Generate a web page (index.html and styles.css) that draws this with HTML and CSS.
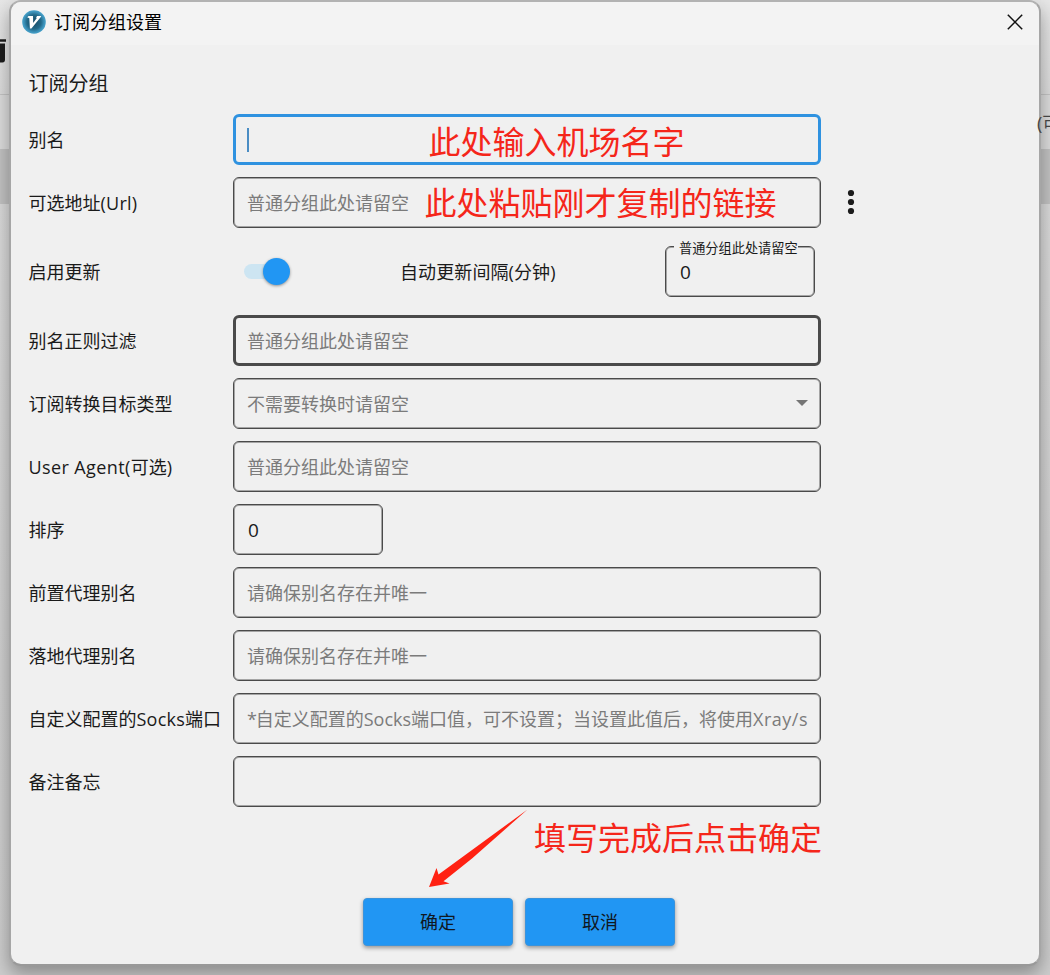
FILE: index.html
```html
<!DOCTYPE html>
<html lang="zh-CN">
<head>
<meta charset="utf-8">
<title>订阅分组设置</title>
<link rel="stylesheet" href="styles.css">
</head>
<body>
<div class="desktop">
  <div class="backdrop">
    <div class="band band-top"></div>
    <div class="band band-head"></div>
    <div class="band band-selected"></div>
    <div class="band band-rest"></div>
  </div>
  <svg class="back-glyph" width="8" height="28" viewBox="0 0 8 28"><path d="M0 3.500h6" stroke="#1c1c1c" stroke-width="2.500"/><path d="M0 6.500h5v16q0 3-2.500 3H0z" fill="#1c1c1c"/></svg>
  <span class="back-text">(可</span>

  <main class="window">
    <header class="titlebar">
      <svg class="logo" width="24" height="24" viewBox="0 0 24 24">
        <defs><radialGradient id="disc"><stop offset="0" stop-color="#174b66"/><stop offset=".6" stop-color="#236989"/><stop offset=".85" stop-color="#3b91b9"/><stop offset="1" stop-color="#48a3cb"/></radialGradient></defs>
        <circle cx="12" cy="12" r="11.800" fill="url(#disc)"/>
        <path d="M5.200 7.200l1.300-1.200h4.500l.2 7L15 7.800l-1.200-.1 1.400-1.600 4.100-.1-.9 1.600L9.400 18.400H7.900L7.300 8.200z" fill="#fff"/>
      </svg>
      <span class="title">订阅分组设置</span>
      <svg class="close" width="16" height="16" viewBox="0 0 16 16"><path d="M.8.800l14.400 14.400M15.200.800L.8 15.200" stroke="#111" stroke-width="1.500" fill="none"/></svg>
    </header>

    <h1 class="heading">订阅分组</h1>

    <section class="form">
      <div class="row"><span class="label">别名</span><div class="field focused"><i class="caret"></i></div></div>
      <div class="row"><span class="label">可选地址<span class="url">(Url)</span></span><div class="field"><span class="hint">普通分组此处请留空</span></div>
        <svg class="more" width="8" height="26" viewBox="0 0 8 26" fill="#1c1c1c"><circle cx="4" cy="4" r="3.100"/><circle cx="4" cy="13" r="3.100"/><circle cx="4" cy="22" r="3.100"/></svg>
      </div>
      <div class="row tall"><span class="label">启用更新</span>
        <div class="update">
          <div class="switch"><i class="knob"></i></div>
          <span class="interval">自动更新间隔(分钟)</span>
          <div class="field small"><span class="float">普通分组此处请留空</span><span class="value">0</span></div>
        </div>
      </div>
      <div class="row"><span class="label">别名正则过滤</span><div class="field strong"><span class="hint">普通分组此处请留空</span></div></div>
      <div class="row"><span class="label">订阅转换目标类型</span><div class="field"><span class="hint">不需要转换时请留空</span><svg class="drop" width="12" height="6" viewBox="0 0 12 6"><path d="M0 0h12L6 6z" fill="#757575"/></svg></div></div>
      <div class="row"><span class="label"><span class="ua">User Agent(</span>可选)</span><div class="field"><span class="hint">普通分组此处请留空</span></div></div>
      <div class="row"><span class="label">排序</span><div class="field small"><span class="value">0</span></div></div>
      <div class="row"><span class="label">前置代理别名</span><div class="field"><span class="hint">请确保别名存在并唯一</span></div></div>
      <div class="row"><span class="label">落地代理别名</span><div class="field"><span class="hint">请确保别名存在并唯一</span></div></div>
      <div class="row"><span class="label">自定义配置的<span class="url">Socks</span>端口</span><div class="field"><span class="hint"><span class="star">*</span>自定义配置的Socks端口值，可不设置；当设置此值后，将使用<span class="xray">Xray/s</span></span></div></div>
      <div class="row"><span class="label">备注备忘</span><div class="field"></div></div>
    </section>

    <footer class="actions">
      <button class="btn">确定</button>
      <button class="btn">取消</button>
    </footer>
  </main>

  <span class="note note-name">此处输入机场名字</span>
  <span class="note note-link">此处粘贴刚才复制的链接</span>
  <span class="note note-done">填写完成后点击确定</span>
  <svg class="arrow" width="100" height="80" viewBox="0 0 100 80"><path d="M98.500.5L43 49.500 14.500 72.200 20.500 74.500 0 78 7.500 59 9.500 65.500z" fill="#ff2112"/></svg>
</div>
</body>
</html>
```
FILE: styles.css
```css
* { box-sizing: border-box; }
body {
  margin: 0;
  font-family: "Open Sans", "Noto Sans CJK SC", sans-serif;
  font-size: 18px;
  color: #1a1a1a;
}
.desktop { position: relative; width: 1050px; height: 975px; overflow: hidden; background: #d6d6d6; }
.backdrop { position: absolute; inset: 0; display: flex; flex-direction: column; }
.band-top { height: 95px; background: linear-gradient(#e6e6e6, #dcdcdc); border-bottom: 1px solid #c4c4c4; }
.band-head { height: 54px; background: #dcdcdc; }
.band-selected { height: 55px; background: #c2c2c2; }
.band-rest { flex: 1; background: linear-gradient(#dadada, #cfcfcf 60%, #cdcdcd); }
.back-glyph { position: absolute; left: 0; top: 37px; }
.back-text { position: absolute; z-index: 1; left: 1037px; top: 110px; line-height: 26px; white-space: nowrap; color: #444; }

.window {
  position: absolute;
  left: 9px;
  top: 0;
  width: 1032px;
  height: 966px;
  border: 2px solid #a6a6a6;
  border-top-color: #b2b2b2;
  border-bottom-color: #999;
  border-radius: 12px;
  background: #f0f0f0;
  box-shadow: 0 8px 18px rgba(0, 0, 0, .32);
  overflow: hidden;
}
.titlebar { height: 43px; padding: 0 16px 3px 11px; display: flex; align-items: center; background: #f3f3f3; }
.title { margin-left: 8px; line-height: 26px; flex: 1; color: #000; }
.heading { margin: 24px 0 15px 17.500px; font-size: 20px; line-height: 30px; font-weight: 400; }
.form { padding-left: 17.500px; display: flex; flex-direction: column; gap: 12px; }
.row { display: flex; align-items: center; height: 51px; }
.tall { height: 63px; }
.label { width: 204.500px; line-height: 26px; white-space: nowrap; }
.url { letter-spacing: .25px; }
.ua { letter-spacing: .4px; }
.field {
  position: relative;
  width: 588px;
  height: 51px;
  padding: 0 12px 0 13px;
  display: flex;
  align-items: center;
  border: 1px solid #4a4a4a;
  border-radius: 6px;
  box-shadow: inset 0 0 0 1px rgba(74, 74, 74, .45);
}
.focused { border: 3px solid #2f92e0; box-shadow: none; padding: 0 11px; }
.strong { border: 3px solid #4a4a4a; box-shadow: none; padding-left: 11px; }
.small { width: 150px; }
.caret { width: 2px; height: 24px; background: #4a8dc4; }
.hint { color: #7b7b7b; line-height: 26px; white-space: nowrap; }
.star { letter-spacing: -1.200px; }
.xray { letter-spacing: .5px; }
.value { font-size: 19px; line-height: 26px; margin-left: 1px; }
.more { margin-left: 26px; margin-top: -1px; }
.drop { margin-left: auto; margin-top: -1px; }
.update { display: flex; align-items: center; width: 582px; }
.switch { width: 45px; height: 15px; margin-left: 11px; border-radius: 8px; background: #cde5f2; display: flex; align-items: center; justify-content: flex-end; }
.knob { width: 27px; height: 27px; margin-right: -1px; flex: none; border-radius: 50%; background: #2196f3; box-shadow: 0 1px 3px rgba(0, 0, 0, .4); }
.interval { margin-left: 111px; line-height: 26px; white-space: nowrap; letter-spacing: .1px; }
.update .field { margin-left: auto; }
.float { position: absolute; left: 8px; top: -9px; padding-left: 5px; background: #f0f0f0; font-size: 13.200px; line-height: 20px; white-space: nowrap; }
.actions { display: flex; gap: 12px; padding: 91px 0 0 352px; }
.btn {
  width: 150px;
  height: 48px;
  padding: 0 0 2px;
  border: 1px solid #3a93dc;
  border-radius: 4px;
  background: #2196f3;
  color: #10181f;
  font: inherit;
  box-shadow: 0 2px 4px rgba(0, 0, 0, .38);
}
.note { position: absolute; font-size: 32px; line-height: 46px; color: #f5261a; white-space: nowrap; }
.note-name { left: 428.500px; top: 119px; }
.note-link { left: 424.500px; top: 180px; }
.note-done { left: 534px; top: 815px; }
.arrow { position: absolute; left: 429px; top: 809px; }
```
